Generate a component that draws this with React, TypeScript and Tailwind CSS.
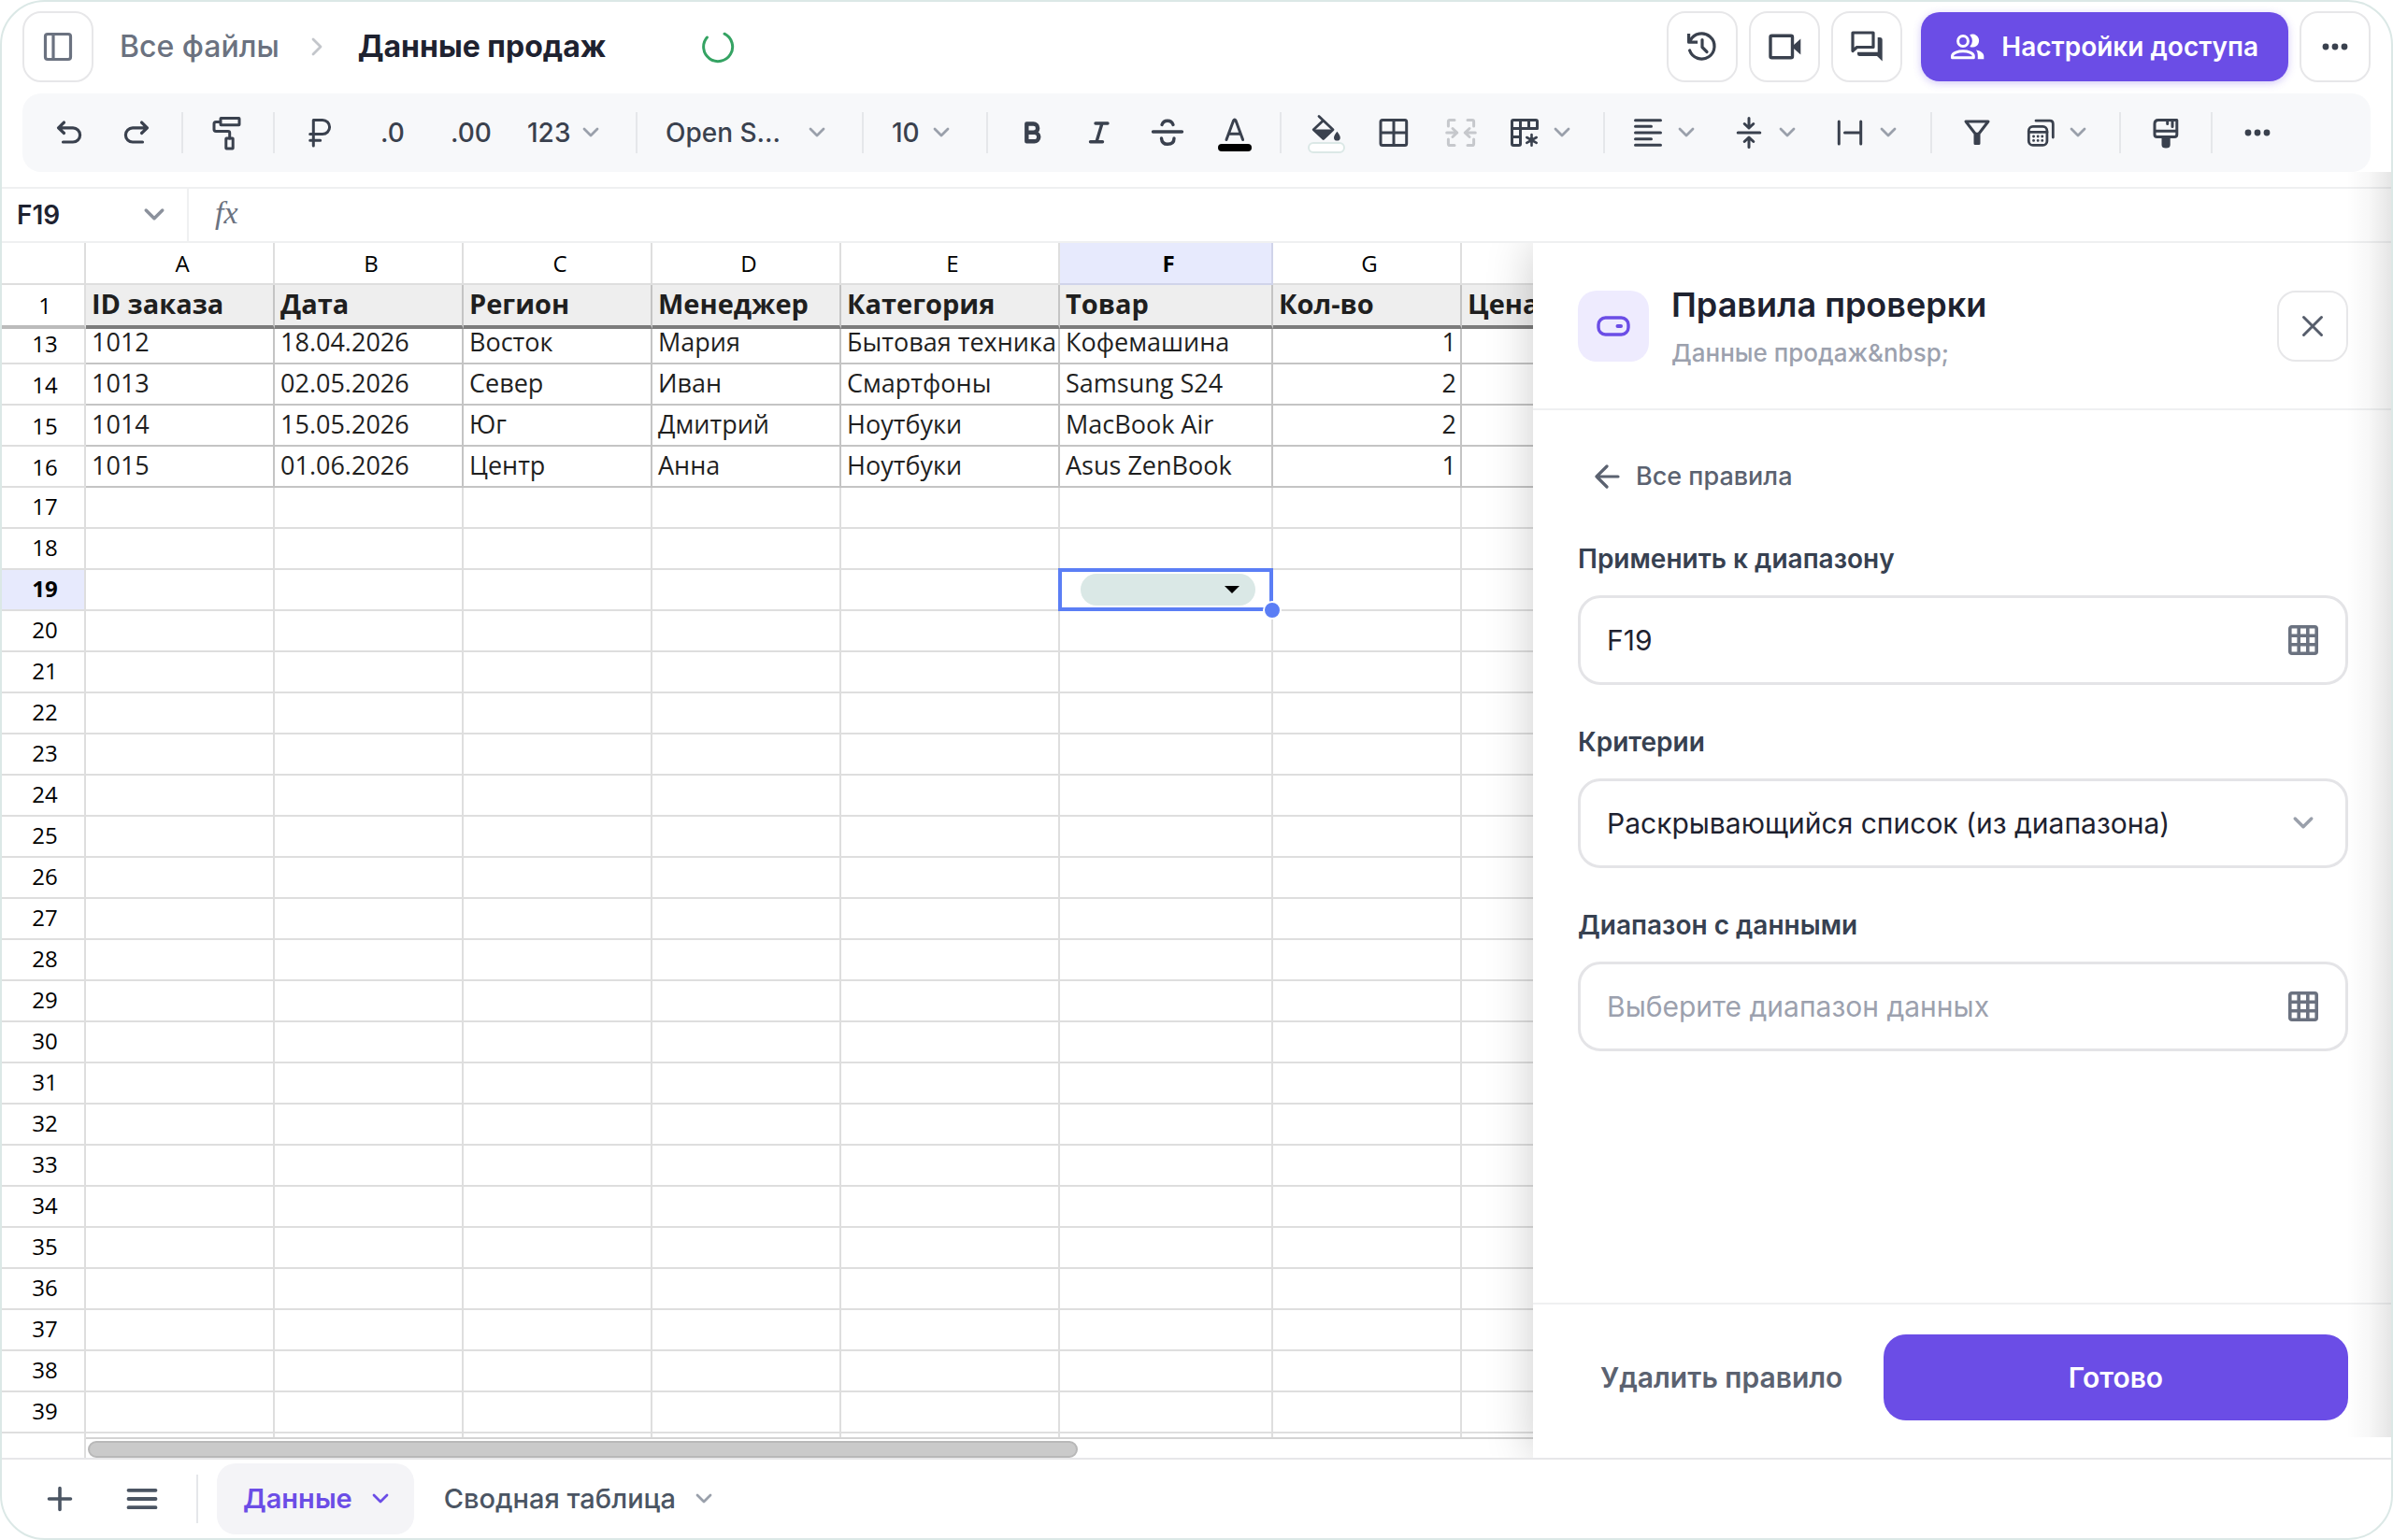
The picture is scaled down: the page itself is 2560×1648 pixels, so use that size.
import React from 'react';

const COLUMNS = ['A', 'B', 'C', 'D', 'E', 'F', 'G', ''];
const HEADINGS = ['ID заказа', 'Дата', 'Регион', 'Менеджер', 'Категория', 'Товар', 'Кол-во', 'Цена'];

const ORDERS = [
  { row: 13, cells: ['1012', '18.04.2026', 'Восток', 'Мария', 'Бытовая техника', 'Кофемашина', '1', ''] },
  { row: 14, cells: ['1013', '02.05.2026', 'Север', 'Иван', 'Смартфоны', 'Samsung S24', '2', ''] },
  { row: 15, cells: ['1014', '15.05.2026', 'Юг', 'Дмитрий', 'Ноутбуки', 'MacBook Air', '2', ''] },
  { row: 16, cells: ['1015', '01.06.2026', 'Центр', 'Анна', 'Ноутбуки', 'Asus ZenBook', '1', ''] },
];

const EMPTY_ROWS = Array.from({ length: 23 }, (_, i) => i + 17);

function Icon({ children, className = '', width = 3 }: { children: React.ReactNode; className?: string; width?: number }) {
  return (
    <svg
      viewBox="0 0 40 40"
      className={`w-10 h-10 shrink-0 overflow-visible ${className}`}
      fill="none"
      stroke="currentColor"
      strokeWidth={width}
      strokeLinecap="round"
      strokeLinejoin="round"
      aria-hidden="true"
    >
      {children}
    </svg>
  );
}

function Chevron({ className = 'text-[#9aa0ab]', large = false }: { className?: string; large?: boolean }) {
  return (
    <svg viewBox="0 0 24 24" className={`${large ? 'w-[30px] h-[30px]' : 'w-6 h-6'} shrink-0 pointer-events-none ${className}`} fill="none" stroke="currentColor" strokeWidth="2.8" strokeLinecap="round" strokeLinejoin="round" aria-hidden="true">
      <path d="M5 8 L12 15 L19 8" />
    </svg>
  );
}

function Dots() {
  return (
    <Icon>
      <g fill="currentColor" stroke="none">
        <circle cx="10" cy="20" r="3.4" />
        <circle cx="20" cy="20" r="3.4" />
        <circle cx="30" cy="20" r="3.4" />
      </g>
    </Icon>
  );
}

function GridIcon() {
  return (
    <Icon className="text-[#6b7280]" width={3.6}>
      <rect x="5.8" y="5.8" width="28.4" height="28.4" rx="2" />
      <path d="M15.2 5.8 V34.2 M24.8 5.8 V34.2 M5.8 15.2 H34.2 M5.8 24.8 H34.2" />
    </Icon>
  );
}

function HeaderButton({ label, children }: { label: string; children: React.ReactNode }) {
  return (
    <button type="button" aria-label={label} className="w-[76px] h-[76px] shrink-0 rounded-[20px] border-2 border-[#e7e7e9] bg-white flex items-center justify-center">
      {children}
    </button>
  );
}

function Tool({ label, children }: { label: string; children: React.ReactNode }) {
  return (
    <button type="button" aria-label={label} className="w-16 h-16 shrink-0 flex items-center justify-center">
      {children}
    </button>
  );
}

function MenuTool({ label, wide = false, children }: { label: string; wide?: boolean; children: React.ReactNode }) {
  return (
    <button type="button" aria-label={label} className={`${wide ? 'w-[100px] pl-2.5 gap-[9px]' : 'w-24 pl-2 gap-2'} h-16 shrink-0 flex items-center`}>
      {children}
      <Chevron />
    </button>
  );
}

function SelectTool({ label, value, className }: { label: string; value: string; className: string }) {
  return (
    <div className={`relative h-16 shrink-0 flex items-center ${className}`}>
      <select aria-label={label} className="appearance-none w-full h-full pl-3.5 bg-transparent outline-none">
        <option>{value}</option>
      </select>
      <Chevron className="absolute right-5 text-[#9aa0ab]" />
    </div>
  );
}

function Separator() {
  return <div className="w-0.5 h-11 mx-2 shrink-0 bg-[#e5e7ea]" />;
}

function TopBar() {
  return (
    <header className="h-24 px-[22px] shrink-0 flex items-center text-[#3a414e]">
      <HeaderButton label="Боковая панель">
        <Icon className="text-[#6b7280]" width={3.2}>
          <rect x="6.5" y="6.5" width="27" height="27" rx="2.5" />
          <path d="M15 6.5 V33.5" />
        </Icon>
      </HeaderButton>
      <nav className="flex items-center ml-7 text-[32px]">
        <a href="#files" className="font-medium text-[#6b7280]">Все файлы</a>
        <svg viewBox="0 0 24 24" className="w-6 h-6 mx-7 text-[#c3c6cb]" fill="none" stroke="currentColor" strokeWidth="2.8" strokeLinecap="round" strokeLinejoin="round" aria-hidden="true">
          <path d="M8 4 L16 12 L8 20" />
        </svg>
        <h1 className="font-bold text-[#1e2230] ml-1">Данные продаж</h1>
      </nav>
      <Icon className="ml-[100px] text-[#35a363]">
        <path d="M27 6.2 A15.5 15.5 0 1 1 8.4 10" />
      </Icon>
      <div className="ml-auto flex items-center gap-3">
        <HeaderButton label="История">
          <Icon width={3.2}>
            <path d="M5.6 7.5 V15.2 H13.5" strokeLinecap="square" />
            <path d="M7.2 13.5 A13.6 13.6 0 1 1 6.6 24" />
            <path d="M20 12.5 V20.5 L25 25.5" />
          </Icon>
        </HeaderButton>
        <HeaderButton label="Видеозвонок">
          <Icon width={3.4}>
            <rect x="5" y="8.3" width="23.5" height="23.4" rx="1.5" />
            <path d="M30 18 L37.3 11.5 V28.5 L30 22 Z" fill="currentColor" stroke="none" />
          </Icon>
        </HeaderButton>
        <HeaderButton label="Комментарии">
          <Icon width={3.2}>
            <path d="M5 5 H27 V20.5 H9.5 L5 24.5 Z" />
            <path d="M31.7 10 H34 Q36.7 10 36.7 12.8 V35.5 L31 30 H12.5 Q10 30 10 27.5 V25.7 H31.7 Z" fill="currentColor" stroke="none" />
          </Icon>
        </HeaderButton>
        <button type="button" className="h-[74px] ml-2 pl-[30px] pr-8 rounded-[20px] bg-[#6b4de6] text-white text-[28px] font-semibold flex items-center gap-4 shadow-[0_2px_8px_rgba(107,77,230,0.3)]">
          <Icon>
            <circle cx="15" cy="14" r="5.4" />
            <path d="M3.5 31.7 V30 C3.5 26.5 10 24.8 15 24.8 C20 24.8 26.3 26.5 26.3 30 V31.7 Z" />
            <path d="M22.3 7.2 A7 7 0 1 1 22.3 20 Q27.5 13.8 22.3 7.2 Z" fill="currentColor" stroke="none" />
            <path d="M29 23.4 C34.5 24.6 37.3 27 37.3 30 V33.2 H30.8 V30 C30.8 27.2 30.4 25.2 29 23.4 Z" fill="currentColor" stroke="none" />
          </Icon>
          Настройки доступа
        </button>
        <HeaderButton label="Ещё">
          <Dots />
        </HeaderButton>
      </div>
    </header>
  );
}

function Toolbar() {
  return (
    <div className="h-[84px] mx-[22px] mt-0.5 pl-[18px] shrink-0 rounded-[20px] bg-[#f7f8fa] flex items-center gap-2 overflow-hidden text-[28px] font-medium text-[#3a414e]">
      <Tool label="Отменить">
        <Icon width={3.2}><path d="M14.5 9 L8.5 14.8 L14.5 20.5 M8.5 14.8 H24 A7.6 7.6 0 0 1 24 30 H13.5" /></Icon>
      </Tool>
      <Tool label="Повторить">
        <Icon width={3.2}><path d="M25.5 9 L31.5 14.8 L25.5 20.5 M31.5 14.8 H16 A7.6 7.6 0 0 0 16 30 H26.5" /></Icon>
      </Tool>
      <Separator />
      <Tool label="Копировать формат">
        <Icon>
          <rect x="12" y="4.5" width="20" height="7.2" rx="0.5" />
          <path d="M11 8.5 H7 Q5 8.5 5 10.5 V16.5 Q5 18.4 7 18.4 H20 Q21.7 18.4 21.7 20 V26" />
          <rect x="17.8" y="26" width="7.4" height="11" rx="0.5" />
        </Icon>
      </Tool>
      <Separator />
      <Tool label="Рубли">
        <Icon><path d="M13.3 34 V6.4 H23 A7.6 7.6 0 0 1 23 21.6 H9.7 M9.7 28.3 H20.7" /></Icon>
      </Tool>
      <button type="button" className="w-[76px] h-16 shrink-0">.0</button>
      <button type="button" className="w-[76px] h-16 shrink-0">.00</button>
      <SelectTool label="Формат чисел" value="123" className="w-[114px]" />
      <Separator />
      <SelectTool label="Шрифт" value="Open S..." className="w-[208px]" />
      <Separator />
      <SelectTool label="Размер шрифта" value="10" className="w-[99px]" />
      <Separator />
      <Tool label="Полужирный">
        <Icon width={4.4}><path d="M13.3 10.5 H20.5 A4.6 4.6 0 0 1 20.5 19.8 H13.3 Z M13.3 19.8 H21.5 A4.7 4.7 0 0 1 21.5 29.3 H13.3 Z" /></Icon>
      </Tool>
      <Tool label="Курсив">
        <Icon width={3.4}><path d="M15 10 H28 M9.5 29.7 H22.5 M22 10 L16 29.7" /></Icon>
      </Tool>
      <Tool label="Зачёркнутый">
        <Icon width={3.4}><path d="M4.5 19 H35.5 M14 11.5 Q15.5 7.2 20 7.2 Q24.5 7.2 26 11.5 M13.5 26 Q14 32.3 20 32.3 Q27 32.3 27 26" /></Icon>
      </Tool>
      <Tool label="Цвет текста">
        <Icon>
          <path d="M11 27.5 L18.6 7 Q19.8 5 21 7 L28.6 27.5 M14 21.2 H25.8" />
          <rect x="2" y="32" width="36" height="8" rx="4" fill="#000" stroke="none" />
        </Icon>
      </Tool>
      <Separator />
      <Tool label="Заливка">
        <Icon width={2.8}>
          <path d="M12 2.5 L27 16.8 L16.7 26.5 L6.2 16.8 L16.5 7" />
          <path d="M6 16.5 H27.5 L18 26.5 Q16.7 27.5 15.4 26.5 Z" fill="currentColor" stroke="none" />
          <path d="M31.4 18.8 Q34.8 23 34.8 25.2 A3.4 3.4 0 0 1 28 25.2 Q28 23 31.4 18.8 Z" fill="currentColor" stroke="none" />
          <rect x="1" y="31" width="38" height="10" rx="5" fill="#fff" stroke="#dbe8e6" strokeWidth="2" />
        </Icon>
      </Tool>
      <Tool label="Границы">
        <Icon><path d="M8 6.5 H32 Q33.7 6.5 33.7 8.5 V31.5 Q33.7 33.5 32 33.5 H8 Q6 33.5 6 31.5 V8.5 Q6 6.5 8 6.5 Z M20 6.5 V33.5 M6 20 H33.7" /></Icon>
      </Tool>
      <Tool label="Объединить ячейки">
        <Icon className="text-[#c6c8cc]">
          <path d="M13 6.4 H8 Q6.4 6.4 6.4 8 V13 M27 6.4 H32 Q33.6 6.4 33.6 8 V13 M13 33.6 H8 Q6.4 33.6 6.4 32 V27 M27 33.6 H32 Q33.6 33.6 33.6 32 V27" />
          <path d="M4.7 20 H15.8 M11 15.5 L15.8 20 L11 24.5 M35.3 20 H24.2 M29 15.5 L24.2 20 L29 24.5" />
        </Icon>
      </Tool>
      <MenuTool label="Закрепить">
        <Icon>
          <path d="M8 6.5 H32 Q33.5 6.5 33.5 8 V15.5 H15.5 V32 Q15.5 33.5 14 33.5 H8 Q6.5 33.5 6.5 32 V8 Q6.5 6.5 8 6.5 Z M15.5 6.5 V15.5 M24.5 6.5 V15.5 M6.5 15.5 H15.5 M6.5 24.5 H15.5" />
          <path d="M27.5 22 V33.8 M22.3 25 L32.7 30.8 M32.7 25 L22.3 30.8" strokeWidth="2.6" />
        </Icon>
      </MenuTool>
      <Separator />
      <MenuTool label="Выравнивание по горизонтали" wide>
        <Icon><path d="M6.5 6.7 H33.5 M6.5 13.3 H23.5 M6.5 20 H33.5 M6.5 26.7 H23.5 M6.5 33.3 H33.5" /></Icon>
      </MenuTool>
      <MenuTool label="Выравнивание по вертикали" wide>
        <Icon><path d="M8.2 20 H31.8 M20 4.5 V15 M15.2 10.5 L20 15 L24.8 10.5 M20 35.5 V25 M15.2 29.5 L20 25 L24.8 29.5" /></Icon>
      </MenuTool>
      <MenuTool label="Перенос текста" wide>
        <Icon><path d="M8.3 8 V32 M31.7 8 V32 M14.5 20 H31.7" /></Icon>
      </MenuTool>
      <Separator />
      <Tool label="Фильтр">
        <Icon>
          <path d="M8 8 H32 L22 21 V31.5 H18 V21 Z" />
          <path d="M20 21 V31" />
        </Icon>
      </Tool>
      <MenuTool label="Сводная таблица">
        <Icon width={2.8}>
          <rect x="7.3" y="13.4" width="19.6" height="20" rx="4.5" />
          <path d="M7.3 19.4 H27 M15 7.2 H30 Q33.3 7.2 33.3 10.5 V25" />
          <path d="M12.5 24 H12.6 M17.1 24 H17.2 M21.7 24 H21.8 M12.5 28.4 H12.6 M17.1 28.4 H17.2 M21.7 28.4 H21.8" />
        </Icon>
      </MenuTool>
      <Separator />
      <Tool label="Условное форматирование">
        <Icon>
          <path d="M12 6.5 H31.8 V22 Q31.8 24.6 29.2 24.6 H10.6 Q8 24.6 8 22 V10.5 Q8 6.5 12 6.5 Z M8 18.2 H31.8 M21.7 6.5 V10.5 M27 6.5 V13.5" />
          <path d="M17 25 H23.2 V33 Q23.2 35 20.1 35 Q17 35 17 33 Z" fill="currentColor" />
        </Icon>
      </Tool>
      <Separator />
      <Tool label="Ещё инструменты">
        <Dots />
      </Tool>
    </div>
  );
}

function FormulaBar() {
  return (
    <div className="h-[60px] mt-4 shrink-0 border-y-2 border-[#eff0f1] flex items-center">
      <div className="relative w-[200px] h-full flex items-center border-r-2 border-[#eff0f1]">
        <input aria-label="Имя ячейки" defaultValue="F19" className="w-full h-full pl-4 text-[28px] font-semibold text-[#1e2230] outline-none" />
        <Chevron large className="absolute right-5 text-[#8b919c]" />
      </div>
      <label htmlFor="formula" className="ml-7 pb-1 font-['Liberation_Serif',serif] italic text-[34px] leading-8 text-[#6b7280]">fx</label>
      <input id="formula" className="flex-1 h-full px-4 text-[28px] outline-none" />
    </div>
  );
}

function Sheet() {
  return (
    <section className="flex-1 min-w-0 flex flex-col overflow-hidden font-['Open_Sans',sans-serif]">
      <div className="flex-1 min-h-0 overflow-hidden">
        <table className="table-fixed w-[1764px] border-separate border-spacing-0 text-[27px] leading-8 text-[#1f1f1f]">
          <colgroup>
            <col className="w-[90px]" />
            <col className="w-[202px]" />
            <col className="w-[202px]" />
            <col className="w-[202px]" />
            <col className="w-[202px]" />
            <col className="w-[234px]" />
            <col className="w-[228px]" />
            <col className="w-[202px]" />
            <col className="w-[202px]" />
          </colgroup>
          <thead>
            <tr className="h-[45px] text-2xl text-black">
              <td className="border-r-2 border-b-2 border-[#dedede]" />
              {COLUMNS.map((name, i) => (
                <th key={i} scope="col" className={`p-0 pl-1.5 border-r-2 border-b-2 ${name === 'F' ? 'font-bold bg-[#e7eafd] border-[#d0d4ea]' : 'font-normal border-[#dedede]'}`}>{name}</th>
              ))}
            </tr>
            <tr className="h-[47px]">
              <th scope="row" className="p-0 pl-1 text-2xl font-normal text-black border-r-2 border-b-4 border-r-[#dedede] border-b-[#bbbbbb]">1</th>
              {HEADINGS.map((text) => (
                <th key={text} scope="col" className="p-0 pl-1.5 pb-1 text-left text-[29px] font-bold bg-[#eeeeee] border-r-2 border-b-4 border-r-[#c4c4c4] border-b-[#7c7c7c] whitespace-nowrap">{text}</th>
              ))}
            </tr>
          </thead>
          <tbody>
            {ORDERS.map(({ row, cells }) => (
              <tr key={row} className={row === 13 ? 'h-[38px]' : 'h-11'}>
                <th scope="row" className="p-0 pl-1 pb-1 align-bottom text-2xl font-normal leading-8 text-black border-r-2 border-b-2 border-[#dedede]">{row}</th>
                {cells.map((text, i) => (
                  <td key={i} className={`p-0 pl-1.5 pr-1 pb-2 align-bottom leading-7 whitespace-nowrap border-r-2 border-b-2 border-[#c4c4c4] ${i === 6 ? 'text-right' : ''}`}>{text}</td>
                ))}
              </tr>
            ))}
            {EMPTY_ROWS.map((row) => (
              <tr key={row} className="h-11">
                <th scope="row" className={`p-0 pl-1 pb-0.5 text-2xl text-black border-r-2 border-b-2 border-[#dedede] ${row === 19 ? 'font-bold bg-[#e7eafd]' : 'font-normal'}`}>{row}</th>
                {COLUMNS.map((name, i) => (
                  <td key={i} className="relative p-0 border-r-2 border-b-2 border-[#dedede]">
                    {row === 19 && name === 'F' && (
                      <div className="absolute -inset-x-0.5 -top-0.5 -bottom-0.5 z-10 border-4 border-[#5b7ef5] bg-white pl-5 pr-[15px] py-0.5">
                        <button type="button" aria-label="Выбрать товар" className="w-full h-[34px] rounded-[17px] bg-[#dae8e6] flex items-center justify-end pr-[17px]">
                          <svg viewBox="0 0 16 8" className="w-4 h-2" aria-hidden="true">
                            <path d="M0 0 H16 L8 8 Z" />
                          </svg>
                        </button>
                        <span className="absolute -right-[13px] -bottom-[13px] w-5 h-5 rounded-full border-2 border-white bg-[#5b7ef5]" />
                      </div>
                    )}
                  </td>
                ))}
              </tr>
            ))}
            <tr className="h-11">
              <td className="border-r-2 border-[#dedede]" />
              {COLUMNS.map((_, i) => (
                <td key={i} className="border-r-2 border-[#dedede]" />
              ))}
            </tr>
          </tbody>
        </table>
      </div>
      <div className="h-[22px] shrink-0 flex">
        <div className="w-[90px] border-r-2 border-[#dedede]" />
        <div className="flex-1 border-t-2 border-[#d4d4d4] pt-0.5 pl-0.5">
          <div className="w-[1059px] h-[18px] rounded-full border-2 border-[#b8b8b8] bg-[#cacaca]" />
        </div>
      </div>
    </section>
  );
}

const fieldClass = 'w-full h-24 pl-7 pr-20 rounded-3xl border-[3px] border-[#e4e4e7] bg-white text-[30px] text-[#1e2230] placeholder:text-[#9ca1ae] outline-none appearance-none';
const labelClass = 'block text-[28px] leading-10 font-semibold text-[#374151]';

function RulesPanel() {
  return (
    <aside className="relative z-20 w-[918px] shrink-0 flex flex-col bg-white shadow-[0_0_48px_rgba(0,0,0,0.2)]">
      <div className="h-[179px] shrink-0 pl-12 pr-[46px] flex items-center border-b-2 border-[#eff0f1]">
        <div className="w-[76px] h-[76px] rounded-[20px] bg-[#eeebfe] text-[#6b4de6] flex items-center justify-center">
          <Icon width={3.4}>
            <rect x="4" y="11" width="32" height="18" rx="7.5" />
            <path d="M24.5 20 H28" strokeWidth="4" />
          </Icon>
        </div>
        <div className="ml-6">
          <h2 className="text-4xl leading-[44px] font-semibold text-[#1e2230]">Правила проверки</h2>
          <p className="mt-3.5 text-[26px] leading-8 font-medium text-[#9ca1ae]">{'Данные продаж&nbsp;'}</p>
        </div>
        <button type="button" aria-label="Закрыть" className="ml-auto w-[76px] h-[76px] rounded-[20px] border-2 border-[#e7e7e9] flex items-center justify-center text-[#565d6b]">
          <Icon><path d="M10.5 10.5 L29.5 29.5 M29.5 10.5 L10.5 29.5" /></Icon>
        </button>
      </div>
      <div className="flex-1 pl-12 pr-[46px] pt-[51px]">
        <button type="button" className="h-10 pl-2.5 flex items-center gap-3 text-[27px] font-medium text-[#5b6270]">
          <Icon width={3.2}><path d="M33 20 H10 M21 9 L10 20 L21 31" /></Icon>
          Все правила
        </button>
        <div className="mt-12 flex flex-col gap-[41px]">
          <div>
            <label htmlFor="range" className={labelClass}>Применить к диапазону</label>
            <div className="relative mt-[19px] flex items-center">
              <input id="range" defaultValue="F19" className={fieldClass} />
              <button type="button" aria-label="Выбрать диапазон" className="absolute right-7"><GridIcon /></button>
            </div>
          </div>
          <div>
            <label htmlFor="criteria" className={labelClass}>Критерии</label>
            <div className="relative mt-[19px] flex items-center">
              <select id="criteria" className={fieldClass}>
                <option>Раскрывающийся список (из диапазона)</option>
              </select>
              <Chevron large className="absolute right-[33px] text-[#9aa0ab]" />
            </div>
          </div>
          <div>
            <label htmlFor="source" className={labelClass}>Диапазон с данными</label>
            <div className="relative mt-[19px] flex items-center">
              <input id="source" placeholder="Выберите диапазон данных" className={fieldClass} />
              <button type="button" aria-label="Выбрать данные" className="absolute right-7"><GridIcon /></button>
            </div>
          </div>
        </div>
      </div>
      <div className="h-[166px] shrink-0 pl-12 pr-[46px] pt-8 flex items-start border-t-2 border-[#eff0f1] text-[30px]">
        <button type="button" className="h-[92px] px-6 font-semibold text-[#5b6270]">Удалить правило</button>
        <button type="button" className="h-[92px] ml-auto w-[497px] rounded-3xl bg-[#6b4de6] font-semibold text-white">Готово</button>
      </div>
    </aside>
  );
}

function SheetTabs() {
  return (
    <footer className="h-[86px] shrink-0 border-t-2 border-[#e7e7e9] flex items-center text-[29px] text-[#4b5563]">
      <button type="button" aria-label="Добавить лист" className="ml-[42px]">
        <Icon width={3.6}><path d="M20 8.5 V31.5 M8.5 20 H31.5" /></Icon>
      </button>
      <button type="button" aria-label="Все листы" className="ml-12">
        <Icon width={3.8}><path d="M5.5 10.8 H34.5 M5.5 20 H34.5 M5.5 29.2 H34.5" /></Icon>
      </button>
      <div className="w-0.5 h-[52px] ml-[38px] bg-[#e5e7ea]" />
      <button type="button" className="h-[76px] ml-5 px-6 rounded-[20px] bg-[#f4f4f7] flex items-center gap-[18px] font-semibold text-[#6b4de6]">
        <span className="ml-1">Данные</span>
        <Chevron className="text-[#6b4de6]" />
      </button>
      <button type="button" className="h-[76px] ml-2 px-6 flex items-center gap-[18px] font-medium">
        Сводная таблица
        <Chevron />
      </button>
    </footer>
  );
}

export default function App() {
  return (
    <main className="relative h-screen flex flex-col overflow-hidden rounded-[48px] border-2 border-[#dbe8e6] bg-white font-['Inter',sans-serif]">
      <TopBar />
      <Toolbar />
      <FormulaBar />
      <div className="flex-1 min-h-0 flex overflow-hidden">
        <Sheet />
        <RulesPanel />
      </div>
      <SheetTabs />
      <div className="absolute z-30 right-0 top-[182px] bottom-[108px] w-12 bg-linear-to-l from-black/10 via-black/3 to-transparent pointer-events-none" />
    </main>
  );
}
